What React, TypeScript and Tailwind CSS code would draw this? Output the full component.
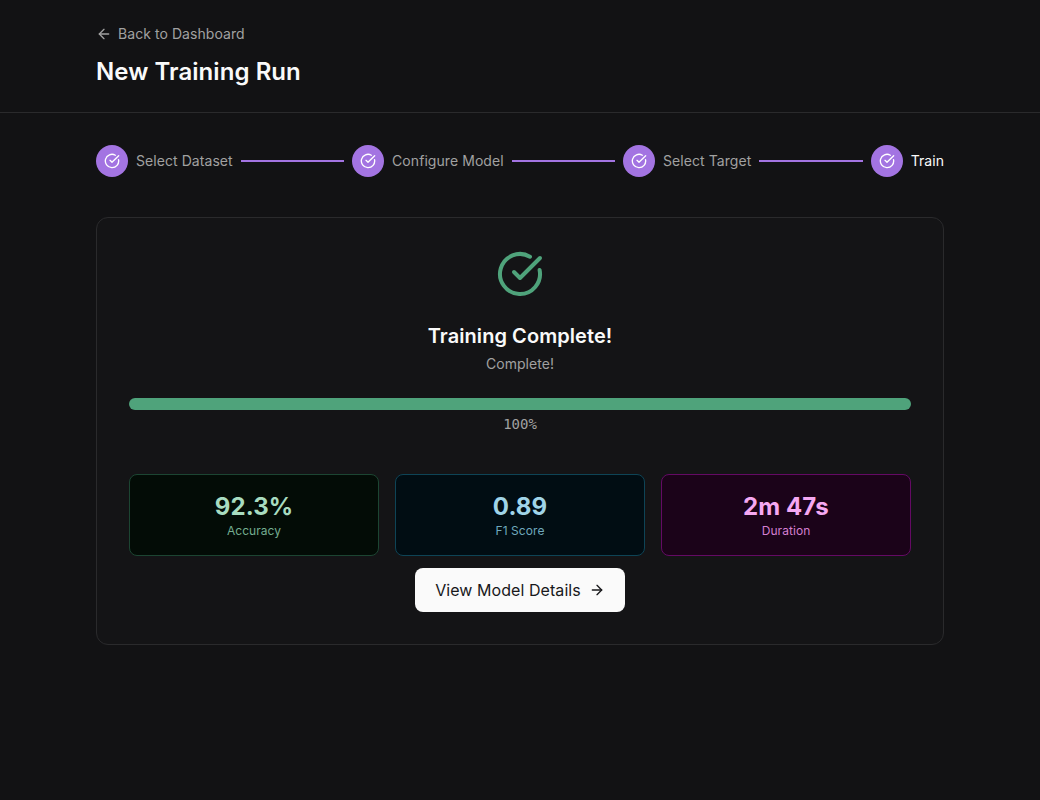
import { Fragment } from "react";
import { ArrowLeft, ArrowRight, CircleCheckBig } from "lucide-react";

const steps = ["Select Dataset", "Configure Model", "Select Target", "Train"];

const stats = [
  { value: "92.3%", label: "Accuracy", box: "border-[#1c4532] bg-[#030c06]", valueColor: "text-[#a8dcc0]", labelColor: "text-[#74ad90]" },
  { value: "0.89", label: "F1 Score", box: "border-[#0e4456] bg-[#010d13]", valueColor: "text-[#a0d4e8]", labelColor: "text-[#6fa8bd]" },
  { value: "2m 47s", label: "Duration", box: "border-[#640a64] bg-[#1b0319]", valueColor: "text-[#f5a8f2]", labelColor: "text-[#d47fd0]" },
];

function Stepper() {
  return (
    <div className="flex items-center">
      {steps.map((step, i) => (
        <Fragment key={step}>
          <div className="flex items-center gap-2">
            <span className="flex size-8 items-center justify-center rounded-full bg-[#a374e2] text-white">
              <CircleCheckBig size={16} />
            </span>
            <span className={`whitespace-nowrap text-sm ${i === steps.length - 1 ? "text-[#fafafa]" : "text-[#a1a1a1]"}`}>{step}</span>
          </div>
          {i < steps.length - 1 && <div className="mx-2 h-0.5 flex-1 bg-[#a374e2]" />}
        </Fragment>
      ))}
    </div>
  );
}

export default function App() {
  return (
    <div className="min-h-[800px] bg-[#121214] font-['Inter',sans-serif] text-[#fafafa] tracking-[0.004em] antialiased">
      <header className="border-b border-[#2a2a2c]">
        <div className="mx-auto max-w-[848px] pt-6 pb-6">
          <a className="mb-3 flex items-center gap-1.5 text-sm text-[#a1a1a1]">
            <ArrowLeft size={16} />
            Back to Dashboard
          </a>
          <h1 className="text-2xl font-semibold">New Training Run</h1>
        </div>
      </header>

      <main className="mx-auto max-w-[848px] pt-8">
        <Stepper />

        <section className="mt-10 rounded-xl border border-[#2a2a2c] bg-[#141416] p-8">
          <div className="flex flex-col items-center">
            <CircleCheckBig size={48} className="text-[#4fa37b]" />
            <h2 className="mt-6 text-xl font-semibold">Training Complete!</h2>
            <p className="mt-1 text-sm text-[#a1a1a1]">Complete!</p>
          </div>

          <div className="mt-6">
            <div className="h-3 rounded-full bg-[#4fa37b]" />
            <p className="mt-1 text-center font-['DejaVu_Sans_Mono',monospace] text-sm font-light tracking-normal text-[#a1a1a1]">100%</p>
          </div>

          <div className="mt-10 grid grid-cols-3 gap-4">
            {stats.map((stat) => (
              <div key={stat.label} className={`rounded-lg border p-4 text-center ${stat.box}`}>
                <div className={`text-2xl font-bold ${stat.valueColor}`}>{stat.value}</div>
                <div className={`text-xs ${stat.labelColor}`}>{stat.label}</div>
              </div>
            ))}
          </div>

          <div className="mt-3 flex justify-center">
            <button type="button" className="flex h-11 w-[210px] items-center justify-center gap-2 rounded-lg bg-[#fafafa] text-base font-normal text-[#18181b]">
              View Model Details
              <ArrowRight size={16} />
            </button>
          </div>
        </section>
      </main>
    </div>
  );
}
